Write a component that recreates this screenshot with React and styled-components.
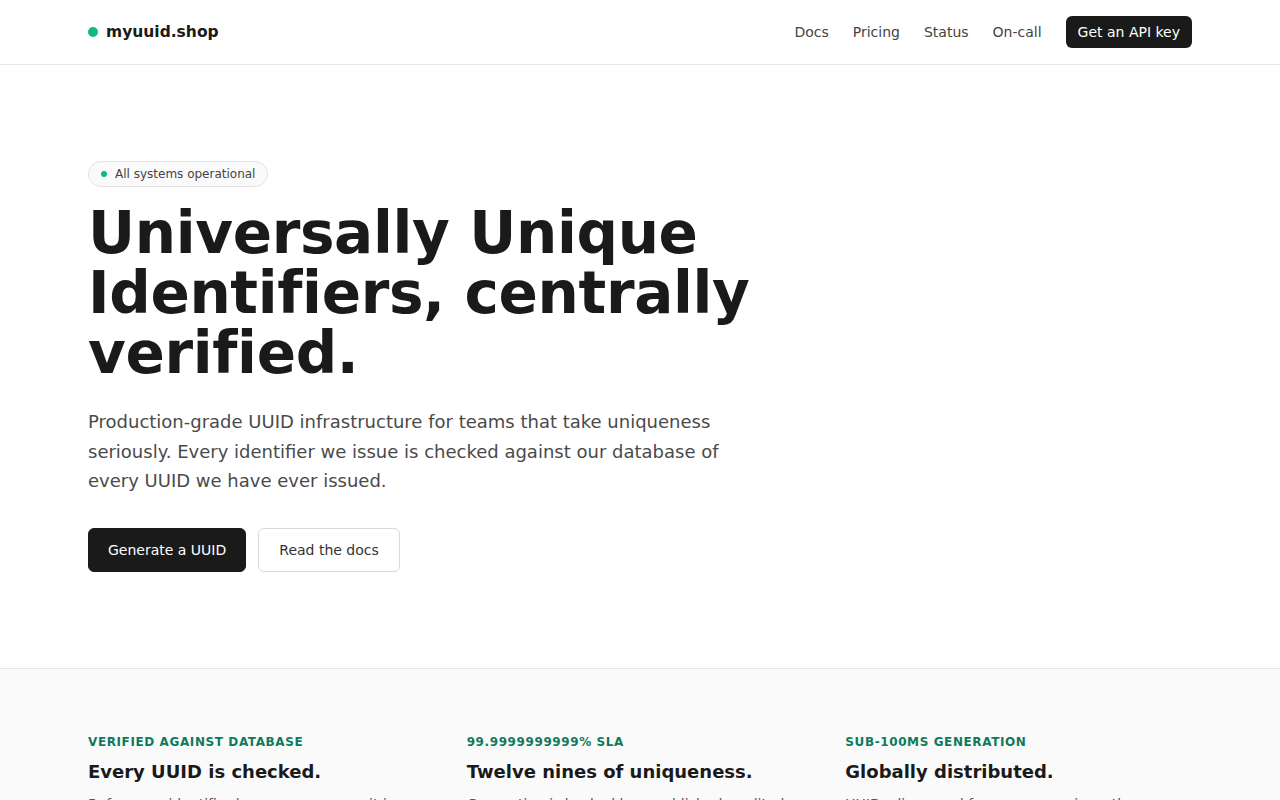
import styled, { createGlobalStyle } from 'styled-components';

const GlobalStyle = createGlobalStyle`
  * { box-sizing: border-box; }
  body {
    margin: 0;
    font-family: "DejaVu Sans", "Liberation Sans", sans-serif;
    color: #1a1a1a;
    background: #ffffff;
  }
`;

const Header = styled.header`
  height: 65px;
  border-bottom: 1px solid #e6e6e6;
`;

const Inner = styled.div`
  max-width: 1104px;
  margin: 0 auto;
`;

const HeaderInner = styled(Inner)`
  height: 100%;
  display: flex;
  align-items: center;
  justify-content: space-between;
`;

const Logo = styled.a`
  display: flex;
  align-items: center;
  gap: 8px;
  font-weight: 700;
  font-size: 15.5px;
  color: #1a1a1a;
  text-decoration: none;
`;

const Dot = styled.span`
  display: inline-block;
  width: ${({ size }) => size}px;
  height: ${({ size }) => size}px;
  border-radius: 50%;
  background: #10b981;
`;

const Nav = styled.nav`
  display: flex;
  align-items: center;
  gap: 24px;
`;

const NavLink = styled.a`
  font-size: 14px;
  color: #444;
  text-decoration: none;
`;

const NavButton = styled.a`
  padding: 0 12px;
  height: 32px;
  display: inline-flex;
  align-items: center;
  border-radius: 6px;
  background: #1a1a1a;
  color: #fff;
  font-size: 14px;
  text-decoration: none;
`;

const Hero = styled.section`
  padding: 96px 0 96px;
`;

const Badge = styled.span`
  display: inline-flex;
  align-items: center;
  gap: 8px;
  height: 26px;
  padding: 0 12px;
  border: 1px solid #e3e3e3;
  background: #fafafa;
  border-radius: 999px;
  font-size: 12px;
  color: #444;
`;

const Headline = styled.h1`
  margin: 16px 0 0;
  max-width: 720px;
  font-size: 58px;
  line-height: 60px;
  font-weight: 700;
  letter-spacing: -0.35px;
  color: #1a1a1a;
`;

const Lead = styled.p`
  margin: 24px 0 0;
  max-width: 650px;
  font-size: 18px;
  line-height: 29.5px;
  color: #4a4a4a;
`;

const Actions = styled.div`
  margin-top: 32px;
  display: flex;
  gap: 12px;
`;

const Button = styled.a`
  height: 44px;
  padding: 0 ${({ primary }) => (primary ? 19 : 20)}px;
  display: inline-flex;
  align-items: center;
  border-radius: 6px;
  font-size: 14px;
  text-decoration: none;
  background: ${({ primary }) => (primary ? '#1a1a1a' : '#ffffff')};
  color: ${({ primary }) => (primary ? '#ffffff' : '#333')};
  border: 1px solid ${({ primary }) => (primary ? '#1a1a1a' : '#d9d9d9')};
`;

const Features = styled.section`
  border-top: 1px solid #e6e6e6;
  background: #fafafa;
  padding: 66px 0 64px;
`;

const Grid = styled(Inner)`
  display: grid;
  grid-template-columns: repeat(3, 1fr);
  gap: 32px;
`;

const Feature = styled.div``;

const Eyebrow = styled.div`
  font-size: 12px;
  font-weight: 700;
  letter-spacing: 0.6px;
  text-transform: uppercase;
  color: #0d7a5c;
`;

const FeatureTitle = styled.h3`
  margin: 12px 0 0;
  font-size: 18px;
  font-weight: 700;
  color: #1a1a1a;
`;

const FeatureText = styled.p`
  margin: 11px 0 0;
  font-size: 14px;
  line-height: 23px;
  color: #555;
`;

const features = [
  {
    eyebrow: 'Verified against database',
    title: 'Every UUID is checked.',
    text: 'Before any identifier leaves our servers it is compared against every UUID we have ever issued.',
  },
  {
    eyebrow: '99.9999999999% SLA',
    title: 'Twelve nines of uniqueness.',
    text: 'Generation is backed by a published, audited SLA. If we ever issue a duplicate, your month is free.',
  },
  {
    eyebrow: 'Sub-100ms generation',
    title: 'Globally distributed.',
    text: 'UUIDs dispensed from seven regions, then synced to Cloud storage in a single central database.',
  },
];

export default function App() {
  return (
    <>
      <GlobalStyle />
      <Header>
        <HeaderInner>
          <Logo href="#">
            <Dot size={10} />
            myuuid.shop
          </Logo>
          <Nav>
            <NavLink href="#">Docs</NavLink>
            <NavLink href="#">Pricing</NavLink>
            <NavLink href="#">Status</NavLink>
            <NavLink href="#">On-call</NavLink>
            <NavButton href="#">Get an API key</NavButton>
          </Nav>
        </HeaderInner>
      </Header>
      <Hero>
        <Inner>
          <Badge>
            <Dot size={6} />
            All systems operational
          </Badge>
          <Headline>Universally Unique Identifiers, centrally verified.</Headline>
          <Lead>
            Production-grade UUID infrastructure for teams that take uniqueness seriously. Every
            identifier we issue is checked against our database of every UUID we have ever issued.
          </Lead>
          <Actions>
            <Button primary href="#">Generate a UUID</Button>
            <Button href="#">Read the docs</Button>
          </Actions>
        </Inner>
      </Hero>
      <Features>
        <Grid>
          {features.map((f) => (
            <Feature key={f.title}>
              <Eyebrow>{f.eyebrow}</Eyebrow>
              <FeatureTitle>{f.title}</FeatureTitle>
              <FeatureText>{f.text}</FeatureText>
            </Feature>
          ))}
        </Grid>
      </Features>
    </>
  );
}
